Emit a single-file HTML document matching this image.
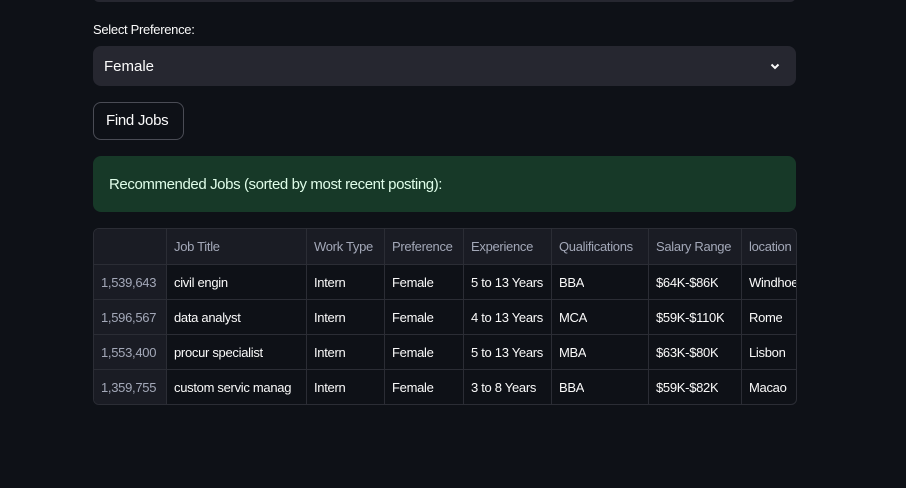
<!DOCTYPE html>
<html><head><style>
*{margin:0;padding:0;box-sizing:border-box}
body{width:906px;height:488px;background:#0e1117;font-family:"Liberation Sans",sans-serif;color:#fafafa;position:relative;overflow:hidden}
.a{position:absolute;white-space:nowrap}
.c{position:absolute;font-size:13px;letter-spacing:-0.3px;white-space:nowrap;overflow:hidden}
</style></head><body>
<div class="a" style="left:93px;top:-10px;width:703px;height:12px;background:#262730;border-radius:8px"></div>
<div class="a" style="left:93px;top:22px;font-size:13px;letter-spacing:-0.3px">Select Preference:</div>
<div class="a" style="left:93px;top:46px;width:703px;height:40px;background:#262730;border-radius:8px"></div>
<div class="a" style="left:104px;top:58px;font-size:15px">Female</div>
<svg class="a" style="left:769px;top:60px" width="12" height="12" viewBox="0 0 12 12"><path d="M2.5 4.5L6 8L9.5 4.5" stroke="#fafafa" stroke-width="2" fill="none"/></svg>
<div class="a" style="left:93px;top:102px;width:91px;height:38px;border:1px solid #4a4c55;border-radius:8px"></div>
<div class="a" style="left:106px;top:112px;font-size:15px;letter-spacing:-0.3px">Find Jobs</div>
<div class="a" style="left:93px;top:156px;width:703px;height:56px;background:#173928;border-radius:8px"></div>
<div class="a" style="left:109px;top:176px;font-size:15px;letter-spacing:-0.4px;color:#dffde9">Recommended Jobs (sorted by most recent posting):</div>
<div class="a" style="left:93px;top:228px;width:704px;height:177px;border:1px solid #2b2d35;border-radius:6px;overflow:hidden">
<svg width="704" height="177" style="position:absolute;left:-1px;top:-1px">
<rect x="0" y="0" width="704" height="37" fill="#1a1c24"/>
<rect x="0" y="0" width="73" height="177" fill="#1a1c24"/>
<g stroke="#2b2d35" stroke-width="1">
<line x1="0" y1="36.5" x2="704" y2="36.5"/><line x1="0" y1="71.5" x2="704" y2="71.5"/><line x1="0" y1="106.5" x2="704" y2="106.5"/><line x1="0" y1="141.5" x2="704" y2="141.5"/>
<line x1="73.5" y1="0" x2="73.5" y2="177"/><line x1="213.5" y1="0" x2="213.5" y2="177"/><line x1="291.5" y1="0" x2="291.5" y2="177"/><line x1="370.5" y1="0" x2="370.5" y2="177"/><line x1="458.5" y1="0" x2="458.5" y2="177"/><line x1="555.5" y1="0" x2="555.5" y2="177"/><line x1="648.5" y1="0" x2="648.5" y2="177"/>
</g></svg>
</div>
<div style="color:#a3a8b8">
<div class="c" style="left:174px;top:239px">Job Title</div>
<div class="c" style="left:314px;top:239px">Work Type</div>
<div class="c" style="left:392px;top:239px">Preference</div>
<div class="c" style="left:471px;top:239px">Experience</div>
<div class="c" style="left:559px;top:239px">Qualifications</div>
<div class="c" style="left:656px;top:239px">Salary Range</div>
<div class="c" style="left:749px;top:239px;width:47px">location</div>
<div class="c" style="left:101px;top:275px">1,539,643</div>
<div class="c" style="left:101px;top:310px">1,596,567</div>
<div class="c" style="left:101px;top:345px">1,553,400</div>
<div class="c" style="left:101px;top:380px">1,359,755</div>
</div>
<div>
<div class="c" style="left:174px;top:275px">civil engin</div>
<div class="c" style="left:314px;top:275px">Intern</div>
<div class="c" style="left:392px;top:275px">Female</div>
<div class="c" style="left:471px;top:275px">5 to 13 Years</div>
<div class="c" style="left:559px;top:275px">BBA</div>
<div class="c" style="left:656px;top:275px">$64K-$86K</div>
<div class="c" style="left:749px;top:275px;width:47px">Windhoek</div>
<div class="c" style="left:174px;top:310px">data analyst</div>
<div class="c" style="left:314px;top:310px">Intern</div>
<div class="c" style="left:392px;top:310px">Female</div>
<div class="c" style="left:471px;top:310px">4 to 13 Years</div>
<div class="c" style="left:559px;top:310px">MCA</div>
<div class="c" style="left:656px;top:310px">$59K-$110K</div>
<div class="c" style="left:749px;top:310px">Rome</div>
<div class="c" style="left:174px;top:345px">procur specialist</div>
<div class="c" style="left:314px;top:345px">Intern</div>
<div class="c" style="left:392px;top:345px">Female</div>
<div class="c" style="left:471px;top:345px">5 to 13 Years</div>
<div class="c" style="left:559px;top:345px">MBA</div>
<div class="c" style="left:656px;top:345px">$63K-$80K</div>
<div class="c" style="left:749px;top:345px">Lisbon</div>
<div class="c" style="left:174px;top:380px;width:130px">custom servic manag</div>
<div class="c" style="left:314px;top:380px">Intern</div>
<div class="c" style="left:392px;top:380px">Female</div>
<div class="c" style="left:471px;top:380px">3 to 8 Years</div>
<div class="c" style="left:559px;top:380px">BBA</div>
<div class="c" style="left:656px;top:380px">$59K-$82K</div>
<div class="c" style="left:749px;top:380px">Macao</div>
</div>
</body></html>
